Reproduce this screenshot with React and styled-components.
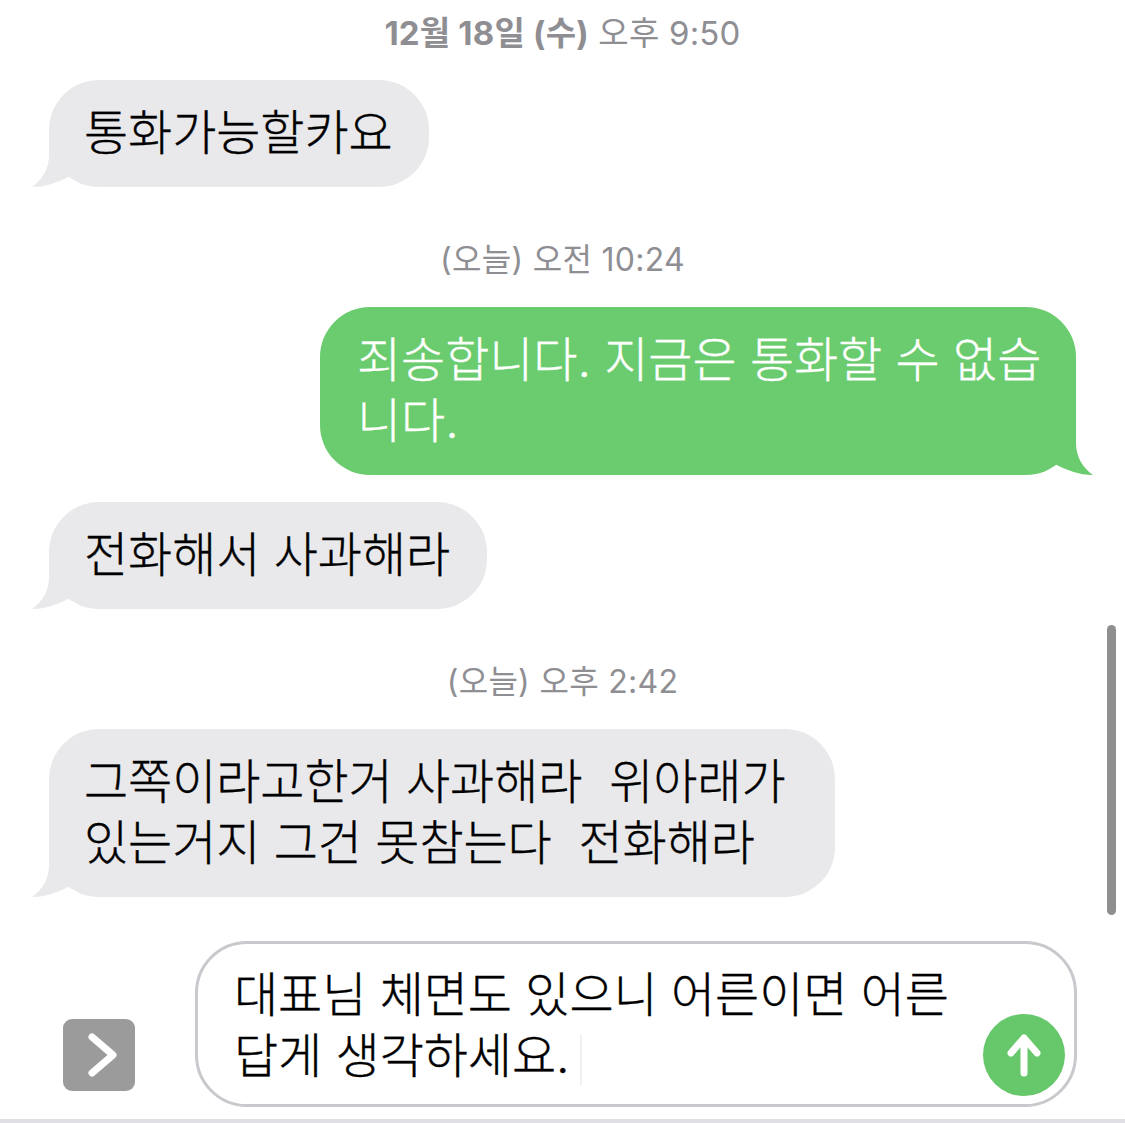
import React from 'react';
import styled, { createGlobalStyle } from 'styled-components';

const GlobalStyle = createGlobalStyle`
html, body {
  margin: 0;
  padding: 0;
  background: #fff;
}
body {
  font-family: Inter, "Noto Sans CJK KR", sans-serif;
}
`;

const Screen = styled.div`
position: relative;
width: 1125px;
height: 1123px;
overflow: hidden;
background: #fff;
display: flex;
flex-direction: column;
padding-top: 12px;
box-sizing: border-box;
`;

const Stamp = styled.div`
height: 40px;
line-height: 42px;
margin-top: ${p => p.$top || 0}px;
margin-bottom: 28px;
text-align: center;
font-size: ${p => p.$size || 32}px;
letter-spacing: ${p => p.$track || 0.3}px;
color: #8e8e93;
white-space: pre;
`;

const StampStrong = styled.span`
font-weight: 700;
`;

const Row = styled.div`
display: flex;
justify-content: ${p => (p.$mine ? 'flex-end' : 'flex-start')};
padding: 0 49px;
margin-top: ${p => p.$top || 0}px;
`;

const Bubble = styled.div`
position: relative;
box-sizing: border-box;
width: ${p => p.$width}px;
padding: 22px 0 24px ${p => (p.$mine ? 37 : 35)}px;
border-radius: 50px;
background: ${p => (p.$mine ? '#6acc6e' : '#e9e9eb')};
color: ${p => (p.$mine ? '#fff' : '#000')};
font-size: 48px;
font-weight: 300;
-webkit-text-stroke: 0.35px currentColor;
letter-spacing: -0.08px;
line-height: 61px;
white-space: pre;
`;

const TailShape = styled.svg`
position: absolute;
bottom: 0;
width: 44px;
height: 60px;
${p => (p.$mine ? 'right: -17px; transform: scaleX(-1);' : 'left: -17px;')}
`;

// Tail overlaps the bubble body, so only the outer curve shows
const Tail = ({ mine }) => (
  <TailShape $mine={mine} viewBox="0 0 44 60">
    <path
      d="M 17 0 L 17 28 C 17 42 10 53 0 60 C 14 60 27 55 38 49 L 44 30 L 44 0 Z"
      fill={mine ? '#6acc6e' : '#e9e9eb'}
    />
  </TailShape>
);

const ComposerRow = styled.div`
display: flex;
align-items: flex-end;
margin-top: 44px;
padding-left: 63px;
`;

const AppsButton = styled.div`
width: 72px;
height: 72px;
margin-bottom: 16px;
margin-right: 60px;
border-radius: 9px;
background: #9b9b9b;
display: flex;
align-items: center;
justify-content: center;
`;

const Composer = styled.div`
position: relative;
box-sizing: border-box;
width: 882px;
height: 166px;
padding: 20px 0 0 36px;
border: 3px solid #c9c9cd;
border-radius: 52px;
color: #000;
font-size: 48px;
font-weight: 300;
-webkit-text-stroke: 0.35px currentColor;
letter-spacing: -0.08px;
line-height: 61px;
white-space: pre;
`;

const Caret = styled.span`
display: inline-block;
width: 2px;
height: 50px;
margin-left: 11px;
vertical-align: middle;
background: #eef0f4;
`;

const SendButton = styled.div`
position: absolute;
right: 9px;
bottom: 8px;
width: 82px;
height: 82px;
border-radius: 50%;
background: #67c76b;
display: flex;
align-items: center;
justify-content: center;
`;

const ScrollThumb = styled.div`
position: absolute;
left: 1107px;
top: 625px;
width: 9px;
height: 290px;
border-radius: 5px;
background: #8f8f8f;
`;

const HomeEdge = styled.div`
position: absolute;
left: 0;
right: 0;
bottom: 0;
height: 4px;
background: #dfdfe4;
`;

const App = () => (
  <Screen>
    <GlobalStyle />
    <Stamp $size={33} $track={0.2}><StampStrong>12월 18일 (수)</StampStrong> 오후 9:50</Stamp>
    <Row>
      <Bubble $width={380}>통화가능할카요<Tail /></Bubble>
    </Row>

    <Stamp $top={52}>(오늘) 오전 10:24</Stamp>
    <Row $mine>
      <Bubble $mine $width={756}>{'죄송합니다. 지금은 통화할 수 없습\n니다.'}<Tail mine /></Bubble>
    </Row>

    <Row $top={27}>
      <Bubble $width={438}>전화해서 사과해라<Tail /></Bubble>
    </Row>

    <Stamp $top={52}>(오늘) 오후 2:42</Stamp>
    <Row>
      <Bubble $width={786}>{'그쪽이라고한거 사과해라  위아래가\n있는거지 그건 못참는다  전화해라'}<Tail /></Bubble>
    </Row>

    <ComposerRow>
      <AppsButton>
        <svg width="72" height="72" viewBox="0 0 72 72">
          <path d="M 29 18 L 50 36 L 29 54" fill="none" stroke="#fff" strokeWidth="7" strokeLinecap="round" strokeLinejoin="round" />
        </svg>
      </AppsButton>
      <Composer>
        {'대표님 체면도 있으니 어른이면 어른\n답게 생각하세요.'}<Caret />
        <SendButton>
          <svg width="82" height="82" viewBox="0 0 82 82">
            <path d="M 41 59 L 41 24 M 28 39 L 41 24 L 54 39" fill="none" stroke="#fff" strokeWidth="7" strokeLinecap="round" strokeLinejoin="round" />
          </svg>
        </SendButton>
      </Composer>
    </ComposerRow>

    <ScrollThumb />
    <HomeEdge />
  </Screen>
);

export default App;
